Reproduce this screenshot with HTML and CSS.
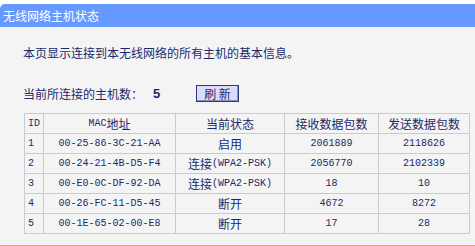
FILE: index.html
```html
<!DOCTYPE html>
<html lang="zh-CN">
<head>
  <meta charset="UTF-8">
  <title>无线网络主机状态</title>
  <link rel="stylesheet" href="styles.css">
</head>
<body>

  <div class="title-bar">无线网络主机状态</div>

  <div class="content">
    <p class="intro">本页显示连接到本无线网络的所有主机的基本信息。</p>

    <!-- Host count and refresh -->
    <div class="count-row">
      <span class="count-label">当前所连接的主机数：</span>
      <span class="count-num">5</span>
      <button class="refresh-btn">刷 新</button>
    </div>

    <!-- Host list -->
    <table class="host-table">
      <colgroup>
        <col class="c-id">
        <col class="c-mac">
        <col class="c-state">
        <col class="c-rx">
        <col class="c-tx">
      </colgroup>
      <tr>
        <th class="en">ID</th>
        <th><span class="en">MAC</span>地址</th>
        <th>当前状态</th>
        <th>接收数据包数</th>
        <th>发送数据包数</th>
      </tr>
      <tr>
        <td class="en id">1</td>
        <td class="en">00-25-86-3C-21-AA</td>
        <td>启用</td>
        <td class="en">2061889</td>
        <td class="en">2118626</td>
      </tr>
      <tr>
        <td class="en id">2</td>
        <td class="en">00-24-21-4B-D5-F4</td>
        <td>连接<span class="en">(WPA2-PSK)</span></td>
        <td class="en">2056770</td>
        <td class="en">2102339</td>
      </tr>
      <tr>
        <td class="en id">3</td>
        <td class="en">00-E0-0C-DF-92-DA</td>
        <td>连接<span class="en">(WPA2-PSK)</span></td>
        <td class="en">18</td>
        <td class="en">10</td>
      </tr>
      <tr>
        <td class="en id">4</td>
        <td class="en">00-26-FC-11-D5-45</td>
        <td>断开</td>
        <td class="en">4672</td>
        <td class="en">8272</td>
      </tr>
      <tr>
        <td class="en id">5</td>
        <td class="en">00-1E-65-02-00-E8</td>
        <td>断开</td>
        <td class="en">17</td>
        <td class="en">28</td>
      </tr>
    </table>
  </div>

</body>
</html>
```

FILE: styles.css
```css
body {
  margin: 0;
  padding-top: 4px;
  background: #fff;
  font-family: "Noto Sans CJK SC", "Liberation Sans", sans-serif;
  font-size: 12px;
  color: #1b2a6b;
}

.title-bar {
  height: 23px;
  line-height: 23px;
  padding-left: 3px;
  background-color: #6699ff;
  color: #fff;
  border-radius: 5px 0 0 0;
}

.content {
  background-color: #f4f4f4;
  padding: 18px 0 11px 23px;
  border-bottom: 2px solid #f2a850;
}

.intro {
  margin: 0;
  line-height: 16px;
}

.count-row {
  display: flex;
  align-items: center;
  height: 17px;
  margin-top: 24px;
}

.count-label {
  width: 130px;
}

.count-num {
  font-family: "Liberation Sans", sans-serif;
  font-weight: bold;
  font-size: 13px;
  width: 43px;
}

.refresh-btn {
  font-family: "Noto Sans CJK SC", sans-serif;
  font-size: 12px;
  color: #1b2a6b;
  background-color: #dcdcfa;
  border: 1px solid #2a3a80;
  box-shadow: inset -1px -1px 0 #8890c0;
  width: 43px;
  height: 17px;
  padding: 0;
  line-height: 14px;
}

.host-table {
  margin-top: 11px;
  margin-left: 1px;
  border-collapse: collapse;
  table-layout: fixed;
  width: 445px;
}

.c-id { width: 19px; }
.c-mac { width: 132px; }
.c-state { width: 109px; }
.c-rx { width: 94px; }
.c-tx { width: 91px; }

.host-table tr {
  height: 20px;
}

.host-table th,
.host-table td {
  border: 1px solid #c6cbd8;
  height: 19px;
  padding: 0;
  line-height: 19px;
  text-align: center;
  font-weight: normal;
  white-space: nowrap;
  overflow: hidden;
}

.host-table .en {
  font-family: "Liberation Mono", "DejaVu Sans Mono", monospace;
  font-size: 10px;
}

.host-table span.en {
  display: inline-block;
  vertical-align: top;
  line-height: 19px;
}

.host-table .id {
  text-align: left;
  padding-left: 3px;
}
```
